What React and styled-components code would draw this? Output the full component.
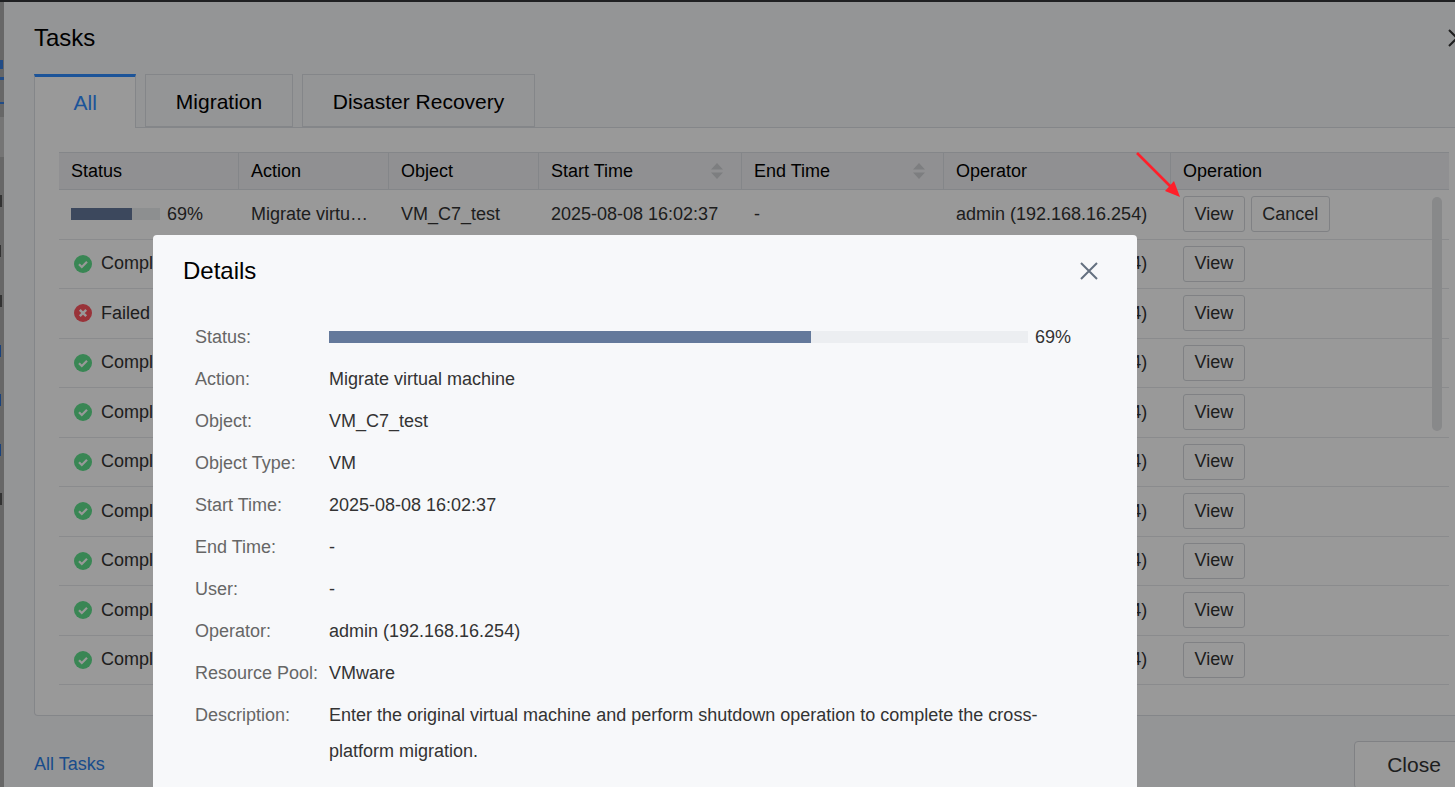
import styled, { createGlobalStyle } from "styled-components"

const GlobalStyle = createGlobalStyle`
    html, body {
        margin: 0;
        padding: 0;
        height: 100%;
        overflow: hidden;
        font-family: "Liberation Sans", Arial, sans-serif;
        color: #000;
    }
    * { box-sizing: border-box; }
`

const HEAD_COLUMNS = "179px 150px 150px 203px 202px 227px 279px"
const BODY_COLUMNS = "180px 150px 150px 203px 202px 227px 278px"

const Page = styled.div`
    display: flex;
    height: 787px;
    padding-top: 2px;
    overflow: hidden;
    background: #34363a;
`

const SideStrip = styled.div`
    flex: none;
    width: 4px;
    height: 785px;
    overflow: hidden;
    background: #acacac;
    display: flex;
    flex-direction: column;
`

const StripMark = styled.span`
    display: block;
    flex: none;
    width: ${(p) => p.$w}px;
    height: ${(p) => p.$h}px;
    margin-top: ${(p) => p.$top}px;
    background: ${(p) => p.$color};
`

const TaskDialog = styled.div`
    flex: none;
    width: 1500px;
    height: 785px;
    padding: 0 30px;
    background: #f7f8fa;
`

const TaskHeader = styled.div`
    height: 72px;
    display: flex;
    align-items: center;
    justify-content: space-between;
`

const TaskTitle = styled.h2`
    margin: 0;
    font-size: 24px;
    font-weight: 400;
`

const CloseIcon = styled.button`
    margin-right: ${(p) => p.$offset}px;
    padding: 0;
    border: 0;
    background: none;
    color: ${(p) => p.$color};
    display: flex;
`

const Tabs = styled.div`
    height: 54px;
    display: flex;
    gap: 8.5px;
    border-bottom: 1px solid #dcdfe4;
`

const Tab = styled.div`
    height: ${(p) => (p.$active ? 54 : 53)}px;
    padding: ${(p) => (p.$active ? "0 38.5px" : "3px 30px 0")};
    display: flex;
    align-items: center;
    font-size: 21px;
    color: ${(p) => (p.$active ? "#2f8cff" : "#000")};
    background: ${(p) => (p.$active ? "#fff" : "#f7f8fa")};
    border: 1px solid #dcdfe4;
    border-top: ${(p) => (p.$active ? "3px solid #2f8cff" : "1px solid #dcdfe4")};
    border-bottom: ${(p) => (p.$active ? "0" : "1px solid #dcdfe4")};
`

const Panel = styled.div`
    position: relative;
    height: 588px;
    padding: 24px 0 0 24px;
    background: #fff;
    border: 1px solid #dcdfe4;
    border-top: 0;
    border-radius: 0 0 4px 4px;
`

const Table = styled.div`
    width: 1390px;
`

const HeadRow = styled.div`
    display: grid;
    grid-template-columns: ${HEAD_COLUMNS};
    height: 38px;
    background: #f0f1f3;
    border-top: 1px solid #dcdfe4;
    border-bottom: 1px solid #dcdfe4;
`

const HeadCell = styled.div`
    display: flex;
    align-items: center;
    justify-content: space-between;
    padding: 0 18px 0 12px;
    font-size: 18px;
    border-left: ${(p) => (p.$first ? "0" : "1px solid #dcdfe4")};
`

const SortIcon = styled.svg`
    width: 12px;
    height: 18px;
    flex: none;
    fill: #d0d2d6;
`

const Row = styled.div`
    display: grid;
    grid-template-columns: ${BODY_COLUMNS};
    height: 49.5px;
    border-bottom: 1px solid #e6e8eb;
    font-size: 18px;
    color: #333;
`

const Cell = styled.div`
    display: flex;
    align-items: center;
    gap: ${(p) => p.$gap || 0}px;
    padding: 0 12px;
    min-width: 0;
    white-space: nowrap;
    overflow: hidden;
`

const Truncate = styled.span`
    overflow: hidden;
    text-overflow: ellipsis;
`

const StatusIcon = styled.svg`
    width: 18px;
    height: 18px;
    flex: none;
    margin: 0 3px;
`

const MiniTrack = styled.div`
    width: 89px;
    height: 12px;
    flex: none;
    background: #eceef1;
`

const Fill = styled.div`
    height: 100%;
    background: #64799b;
`

const SmallButton = styled.button`
    height: 36px;
    padding: 0 10.5px;
    font: inherit;
    color: #333;
    background: #fff;
    border: 1.5px solid #d5d8dd;
    border-radius: 3px;
`

const Scrollbar = styled.div`
    position: absolute;
    left: 1397px;
    top: 69px;
    width: 10px;
    height: 234px;
    border-radius: 5px;
    background: #e3e4e6;
`

const TaskFooter = styled.div`
    display: flex;
    align-items: center;
    justify-content: space-between;
    padding-top: 25px;
`

const LinkText = styled.a`
    margin-top: -2px;
    font-size: 18px;
    color: #2b7fe8;
`

const FooterButton = styled.button`
    width: 120px;
    height: 48px;
    font: inherit;
    font-size: 21px;
    color: #333;
    background: #fff;
    border: 1.5px solid #d5d8dd;
    border-radius: 4px;
`

const Overlay = styled.div`
    position: fixed;
    inset: 0;
    padding: 235px 0 0 153px;
    background: rgba(0, 0, 0, 0.4);
    overflow: hidden;
`

const Modal = styled.div`
    width: 984px;
    height: 600px;
    background: #f7f8fa;
    border-radius: 4px;
`

const ModalHeader = styled.div`
    height: 72px;
    padding: 0 39px 0 30px;
    display: flex;
    align-items: center;
    justify-content: space-between;
`

const ModalTitle = styled.h3`
    margin: 0;
    font-size: 24px;
    font-weight: 400;
`

const ModalBody = styled.div`
    padding: 9px 60px 0 42px;
`

const DetailRow = styled.div`
    display: grid;
    grid-template-columns: 134px 1fr;
    padding: 3px 0;
    font-size: 18px;
    line-height: 36px;
`

const DetailLabel = styled.div`
    color: #666;
`

const DetailValue = styled.div`
    display: flex;
    align-items: center;
    gap: 7px;
    color: #333;
`

const Track = styled.div`
    width: 699px;
    height: 12px;
    background: #eceef1;
`

const ArrowSvg = styled.svg`
    position: fixed;
    left: 1130px;
    top: 146px;
    width: 60px;
    height: 60px;
`

const rows = [
    { status: "progress" },
    { status: "Completed" },
    { status: "Failed" },
    { status: "Completed" },
    { status: "Completed" },
    { status: "Completed" },
    { status: "Completed" },
    { status: "Completed" },
    { status: "Completed" },
    { status: "Completed" },
]

const details = [
    ["Action:", "Migrate virtual machine"],
    ["Object:", "VM_C7_test"],
    ["Object Type:", "VM"],
    ["Start Time:", "2025-08-08 16:02:37"],
    ["End Time:", "-"],
    ["User:", "-"],
    ["Operator:", "admin (192.168.16.254)"],
    ["Resource Pool:", "VMware"],
    ["Description:", "Enter the original virtual machine and perform shutdown operation to complete the cross-platform migration."],
]

const stripMarks = [
    [58, 9, 3, "#3a7fe0"], [8, 3, 4, "#3a7fe0"], [22, 2, 4, "#3a7fe0"], [13, 40, 4, "#c4c4c4"],
    [38, 12, 2, "#555"], [38, 12, 1, "#555"], [38, 12, 2, "#555"], [38, 12, 1, "#2b6fd0"],
    [37, 12, 1, "#2b6fd0"], [38, 12, 1, "#2b6fd0"], [37, 12, 2, "#555"],
]

const Sort = () => (
    <SortIcon viewBox="0 0 12 18">
        <path d="M6 1l6 6.5H0zM6 17l6-6.5H0z" />
    </SortIcon>
)

const X = ({ size, color, width, offset = 0 }) => (
    <CloseIcon $color={color} $offset={offset}>
        <svg width={size} height={size} viewBox="0 0 18 18" fill="none" stroke="currentColor" strokeWidth={width}>
            <path d="M1 1l16 16M17 1L1 17" />
        </svg>
    </CloseIcon>
)

const Status = ({ ok }) => (
    <StatusIcon viewBox="0 0 18 18">
        <circle cx="9" cy="9" r="9" fill={ok ? "#5fe08c" : "#ff5560"} />
        {ok ? (
            <path d="M5 9.2l2.8 2.8L13 6.8" fill="none" stroke="#fff" strokeWidth="2.2" />
        ) : (
            <path d="M5.8 5.8l6.4 6.4M12.2 5.8l-6.4 6.4" fill="none" stroke="#fff" strokeWidth="2.4" />
        )}
    </StatusIcon>
)

export default function App() {
    return (
        <Page>
            <GlobalStyle />
            <SideStrip>
                {stripMarks.map(([top, h, w, color], i) => (
                    <StripMark key={i} $top={top} $h={h} $w={w} $color={color} />
                ))}
            </SideStrip>
            <TaskDialog>
                <TaskHeader>
                    <TaskTitle>Tasks</TaskTitle>
                    <X size={18} color="#333" width={2} offset={8} />
                </TaskHeader>
                <Tabs>
                    <Tab $active>All</Tab>
                    <Tab>Migration</Tab>
                    <Tab>Disaster Recovery</Tab>
                </Tabs>
                <Panel>
                    <Table>
                        <HeadRow>
                            <HeadCell $first>Status</HeadCell>
                            <HeadCell>Action</HeadCell>
                            <HeadCell>Object</HeadCell>
                            <HeadCell>Start Time<Sort /></HeadCell>
                            <HeadCell>End Time<Sort /></HeadCell>
                            <HeadCell>Operator</HeadCell>
                            <HeadCell>Operation</HeadCell>
                        </HeadRow>
                        {rows.map((row, i) => (
                            <Row key={i}>
                                {row.status === "progress" ? (
                                    <Cell $gap={7}>
                                        <MiniTrack>
                                            <Fill style={{ width: "69%" }} />
                                        </MiniTrack>
                                        69%
                                    </Cell>
                                ) : (
                                    <Cell $gap={6}>
                                        <Status ok={row.status === "Completed"} />
                                        {row.status}
                                    </Cell>
                                )}
                                <Cell><Truncate>Migrate virtual machine</Truncate></Cell>
                                <Cell>VM_C7_test</Cell>
                                <Cell>2025-08-08 16:02:37</Cell>
                                <Cell>-</Cell>
                                <Cell>admin (192.168.16.254)</Cell>
                                <Cell $gap={6}>
                                    <SmallButton>View</SmallButton>
                                    {i === 0 && <SmallButton>Cancel</SmallButton>}
                                </Cell>
                            </Row>
                        ))}
                    </Table>
                    <Scrollbar />
                </Panel>
                <TaskFooter>
                    <LinkText>All Tasks</LinkText>
                    <FooterButton>Close</FooterButton>
                </TaskFooter>
            </TaskDialog>
            <Overlay>
                <Modal>
                    <ModalHeader>
                        <ModalTitle>Details</ModalTitle>
                        <X size={18} color="#64707f" width={2} />
                    </ModalHeader>
                    <ModalBody>
                        <DetailRow>
                            <DetailLabel>Status:</DetailLabel>
                            <DetailValue>
                                <Track>
                                    <Fill style={{ width: "69%" }} />
                                </Track>
                                69%
                            </DetailValue>
                        </DetailRow>
                        {details.map(([label, value]) => (
                            <DetailRow key={label}>
                                <DetailLabel>{label}</DetailLabel>
                                <DetailValue>{value}</DetailValue>
                            </DetailRow>
                        ))}
                    </ModalBody>
                </Modal>
            </Overlay>
            <ArrowSvg viewBox="0 0 60 60">
                <path d="M7 7L44 44" stroke="#ff1f2a" strokeWidth="2.6" fill="none" />
                <path d="M50 51L35 45L44 35z" fill="#ff1f2a" />
            </ArrowSvg>
        </Page>
    )
}
